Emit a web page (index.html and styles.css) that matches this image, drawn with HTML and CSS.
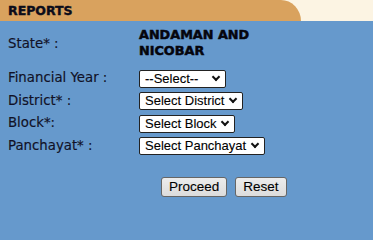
FILE: index.html
```html
<!DOCTYPE html>
<html>
<head>
<meta charset="utf-8">
<link rel="stylesheet" href="styles.css">
</head>
<body>
<div class="page">
  <div class="header">
    <div class="tab">REPORTS</div>
  </div>
  <div class="panel">
    <div class="form">
      <div class="label">State* :</div>
      <div class="state">ANDAMAN AND NICOBAR</div>

      <div class="label">Financial Year :</div>
      <div class="field"><span class="sel"><select><option>--Select--</option><option>2023-2024</option></select></span></div>

      <div class="label">District* :</div>
      <div class="field"><span class="sel"><select><option>Select District</option></select></span></div>

      <div class="label">Block*:</div>
      <div class="field"><span class="sel"><select><option>Select Block</option></select></span></div>

      <div class="label">Panchayat* :</div>
      <div class="field"><span class="sel"><select><option>Select Panchayat</option></select></span></div>
    </div>
    <div class="actions">
      <button class="btn">Proceed</button>
      <button class="btn">Reset</button>
    </div>
  </div>
</div>
</body>
</html>
```

FILE: styles.css
```css
html, body {
  margin: 0;
  padding: 0;
  background: #fcf4e3;
}
.page {
  width: 100%;
  min-height: 100vh;
  display: flex;
  flex-direction: column;
}
.header {
  height: 21px;
  display: flex;
}
.tab {
  width: 293px;
  height: 21px;
  padding-left: 8px;
  background: #d9a25e;
  border-top-right-radius: 20px 21px;
  font-family: "DejaVu Sans", Verdana, sans-serif;
  font-weight: bold;
  font-size: 12.5px;
  line-height: 22px;
  color: #0c0c1a;
  -webkit-text-stroke: 0.4px #0c0c1a;
}
.panel {
  flex: 1;
  background: #6699cc;
  padding: 2px 0 0 8px;
}
.form {
  display: grid;
  grid-template-columns: 131px auto;
  row-gap: 4.5px;
  align-items: center;
}
.label {
  font-family: "DejaVu Sans", Verdana, sans-serif;
  font-size: 13.3px;
  color: #111126;
  -webkit-text-stroke: 0.15px #111126;
  white-space: nowrap;
}
.state {
  width: 125px;
  padding: 4px 0 5px;
  font-family: "DejaVu Sans", Verdana, sans-serif;
  font-weight: bold;
  font-size: 12.8px;
  line-height: 16px;
  color: #05050d;
  -webkit-text-stroke: 0.5px #05050d;
}
.field {
  height: 18px;
  display: flex;
}
.sel {
  position: relative;
  display: inline-block;
  height: 18px;
}
.sel::after {
  content: "";
  position: absolute;
  right: 7px;
  top: 5px;
  width: 4px;
  height: 4px;
  border-right: 2px solid #111;
  border-bottom: 2px solid #111;
  transform: rotate(45deg);
  pointer-events: none;
}
select {
  -webkit-appearance: none;
  appearance: none;
  height: 18px;
  margin: 0;
  padding: 0 17px 0 5px;
  border: 1px solid #222;
  border-radius: 2px;
  background: #fff;
  font-family: "Liberation Sans", Arial, sans-serif;
  font-size: 13px;
  line-height: 16px;
  color: #000;
  -webkit-text-stroke: 0.1px #000;
}
.actions {
  display: flex;
  gap: 8px;
  margin: 23px 0 0 153px;
}
.btn {
  height: 20px;
  margin: 0;
  padding: 0 7px;
  border: 1px solid #666;
  border-radius: 3px;
  background: linear-gradient(#ececec, #dcdcdc);
  font-family: "Liberation Sans", Arial, sans-serif;
  font-size: 13.5px;
  color: #000;
  line-height: 18px;
  -webkit-text-stroke: 0.1px #000;
}
```
